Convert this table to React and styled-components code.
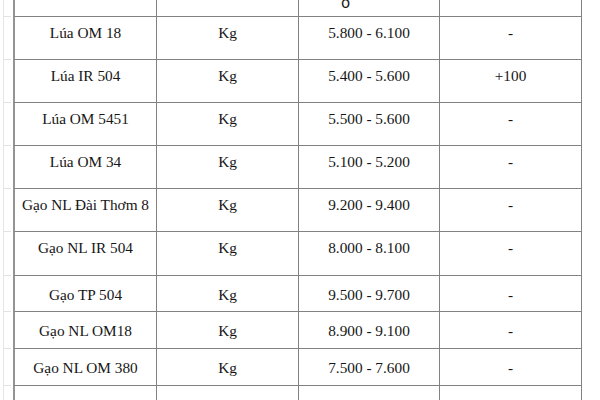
import React from "react";
import styled, { createGlobalStyle } from "styled-components";

const GlobalStyle = createGlobalStyle`
  html, body {
    margin: 0;
    padding: 0;
    background: #ffffff;
  }
  body {
    font-family: "Liberation Serif", "Times New Roman", serif;
    color: #161616;
    overflow: hidden;
  }
`;

const rows = [
  { name: "Lúa OM 18", unit: "Kg", price: "5.800 - 6.100", change: "-", h: 43, pt: 7 },
  { name: "Lúa IR 504", unit: "Kg", price: "5.400 - 5.600", change: "+100", h: 43, pt: 7 },
  { name: "Lúa OM 5451", unit: "Kg", price: "5.500 - 5.600", change: "-", h: 43, pt: 7 },
  { name: "Lúa OM 34", unit: "Kg", price: "5.100 - 5.200", change: "-", h: 43, pt: 7 },
  { name: "Gạo NL Đài Thơm 8", unit: "Kg", price: "9.200 - 9.400", change: "-", h: 43, pt: 7 },
  { name: "Gạo NL IR 504", unit: "Kg", price: "8.000 - 8.100", change: "-", h: 44, pt: 7 },
  { name: "Gạo TP 504", unit: "Kg", price: "9.500 - 9.700", change: "-", h: 36, pt: 10 },
  { name: "Gạo NL OM18", unit: "Kg", price: "8.900 - 9.100", change: "-", h: 37, pt: 10 },
  { name: "Gạo NL OM 380", unit: "Kg", price: "7.500 - 7.600", change: "-", h: 37, pt: 10 },
  { name: "Gạo NL OM 5451", unit: "Kg", price: "9.400 - 9.500", change: "-", h: 37, pt: 10 },
];

function App() {
  return (
    <>
      <GlobalStyle />
      <Sheet>
        <Row $h={17}>
          <Gutter />
          <HeaderCell $first />
          <HeaderCell />
          <HeaderCell>
            <Cut>o</Cut>
          </HeaderCell>
          <HeaderCell />
        </Row>
        {rows.map((r) => (
          <Row key={r.name} $h={r.h}>
            <Gutter />
            <Cell $first $pt={r.pt}>{r.name}</Cell>
            <Cell $pt={r.pt}>{r.unit}</Cell>
            <Cell $pt={r.pt}>{r.price}</Cell>
            <Cell $pt={r.pt}>{r.change}</Cell>
          </Row>
        ))}
      </Sheet>
    </>
  );
}

const Sheet = styled.div`
  display: flex;
  flex-direction: column;
  width: 600px;
  height: 400px;
  overflow: hidden;
`;

const Row = styled.div`
  display: grid;
  grid-template-columns: 13px 144px 142px 141px 142px;
  height: ${(p) => p.$h}px;
  flex-shrink: 0;
`;

const Gutter = styled.div`
  margin-left: 3px;
  margin-right: 2px;
  border-left: 1px solid #e6e6e6;
  border-bottom: 1px solid #e2e2e2;
`;

const Cell = styled.div`
  box-sizing: border-box;
  display: flex;
  justify-content: center;
  align-items: flex-start;
  padding-top: ${(p) => p.$pt}px;
  font-size: 15.3px;
  line-height: 18px;
  white-space: nowrap;
  border-right: 1px solid #828282;
  border-bottom: 1px solid #828282;
  border-left: ${(p) => (p.$first ? "2px solid #949494" : "none")};
`;

const HeaderCell = styled(Cell)`
  align-items: flex-end;
  justify-content: flex-start;
  padding: 0 0 7px 42px;
  overflow: hidden;
`;

const Cut = styled.span`
  font-family: "DejaVu Sans", sans-serif;
  font-size: 15px;
  line-height: 12px;
`;

export default App;
